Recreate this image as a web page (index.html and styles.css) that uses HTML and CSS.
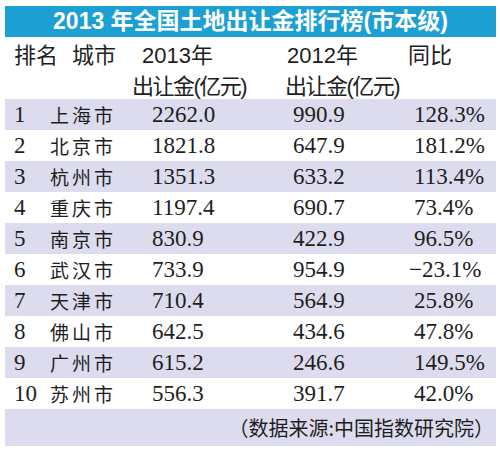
FILE: index.html
```html
<!DOCTYPE html>
<html lang="zh-CN">
<head>
    <meta charset="UTF-8">
    <title>2013年全国土地出让金排行榜</title>
    <link rel="stylesheet" href="styles.css">
</head>
<body>
<div class="board">
    <h1 class="title">2013 年全国土地出让金排行榜(市本级)</h1>
    <div class="head">
        <span class="h-rank">排名</span>
        <span class="h-city">城市</span>
        <span class="h-y13">2013年</span>
        <span class="h-y12">2012年</span>
        <span class="h-pct">同比</span>
        <span class="h-unit13">出让金(亿元)</span>
        <span class="h-unit12">出让金(亿元)</span>
    </div>
    <ul class="rows">
        <li class="odd"><span class="rank">1</span><span class="city">上海市</span><span class="num">2262.0</span><span class="num">990.9</span><span class="pct">128.3%</span></li>
        <li><span class="rank">2</span><span class="city">北京市</span><span class="num">1821.8</span><span class="num">647.9</span><span class="pct">181.2%</span></li>
        <li class="odd"><span class="rank">3</span><span class="city">杭州市</span><span class="num">1351.3</span><span class="num">633.2</span><span class="pct">113.4%</span></li>
        <li><span class="rank">4</span><span class="city">重庆市</span><span class="num">1197.4</span><span class="num">690.7</span><span class="pct">73.4%</span></li>
        <li class="odd"><span class="rank">5</span><span class="city">南京市</span><span class="num">830.9</span><span class="num">422.9</span><span class="pct">96.5%</span></li>
        <li><span class="rank">6</span><span class="city">武汉市</span><span class="num">733.9</span><span class="num">954.9</span><span class="pct neg">&minus;23.1%</span></li>
        <li class="odd"><span class="rank">7</span><span class="city">天津市</span><span class="num">710.4</span><span class="num">564.9</span><span class="pct">25.8%</span></li>
        <li><span class="rank">8</span><span class="city">佛山市</span><span class="num">642.5</span><span class="num">434.6</span><span class="pct">47.8%</span></li>
        <li class="odd"><span class="rank">9</span><span class="city">广州市</span><span class="num">615.2</span><span class="num">246.6</span><span class="pct">149.5%</span></li>
        <li><span class="rank">10</span><span class="city">苏州市</span><span class="num">556.3</span><span class="num">391.7</span><span class="pct">42.0%</span></li>
    </ul>
    <p class="source">（数据来源:中国指数研究院）</p>
</div>
</body>
</html>
```

FILE: styles.css
```css
*{
    margin: 0;
    padding: 0;
}
body{
    background: #fff;
    color: #1e1e1e;
}
.board{
    padding: 6px 4px 6px 5px;
}
.title{
    height: 31px;
    line-height: 31px;
    background: #1c9fd2;
    color: #fff;
    text-align: center;
    font-family: "Liberation Sans", "Noto Sans CJK SC", sans-serif;
    font-size: 23px;
    font-weight: bold;
}
.head{
    display: grid;
    grid-template-columns: 67px 60px 153px 123px 1fr;
    grid-template-rows: 31px 31px;
    align-items: center;
    font-family: "Liberation Sans", "Noto Sans CJK SC", sans-serif;
    font-size: 22px;
    white-space: nowrap;
}
.h-rank{
    padding-left: 9px;
}
.h-y13{
    padding-left: 10px;
}
.h-y12{
    padding-left: 2px;
}
.h-unit13{
    grid-column: 3;
    letter-spacing: -1.5px;
}
.h-unit12{
    grid-column: 4;
    letter-spacing: -1.5px;
}
.rows{
    list-style: none;
}
.rows>li{
    display: grid;
    grid-template-columns: 45px 102px 141px 121px 1fr;
    height: 31px;
    align-items: center;
    font-family: "Liberation Serif", "Noto Sans CJK SC", serif;
    font-size: 23px;
}
.rows>li.odd{
    background: #dddcee;
}
.rank{
    padding-left: 9px;
}
.city{
    font-size: 19px;
    letter-spacing: 3px;
}
.neg{
    margin-left: -5px;
}
.source{
    height: 37px;
    line-height: 37px;
    background: #dddcee;
    text-align: right;
    padding-right: 2px;
    font-family: "Noto Sans CJK SC", sans-serif;
    font-size: 20px;
}
```
